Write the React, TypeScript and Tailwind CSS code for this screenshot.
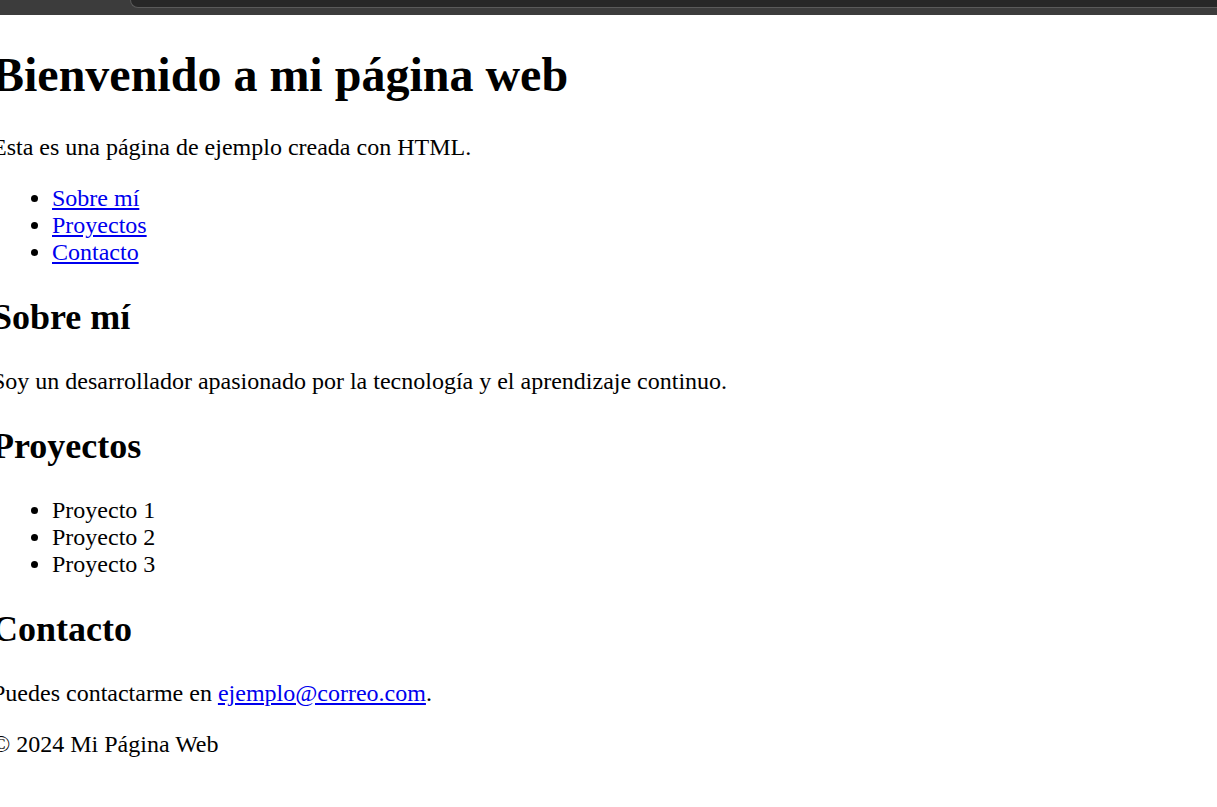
export default function App() {
  return (
    <div className="min-h-screen bg-white">
      {/* browser chrome strip at the top */}
      <div className="flex h-[15px] bg-[#3c3c3c]">
        <div className="w-[130px]" />
        <div className="h-[8px] flex-1 rounded-bl-[12px] border-b border-l border-[#5a5a5a] bg-[#272727]" />
      </div>

      <div className="ml-[-8px] font-['Liberation_Serif','Times_New_Roman',serif] text-[24px] leading-[normal] text-black">
        <h1 className="my-[32.16px] text-[48px] font-bold">Bienvenido a mi página web</h1>
        <p className="my-[24px]">Esta es una página de ejemplo creada con HTML.</p>
        <ul className="my-[24px] list-disc pl-[60px]">
          <li>
            <a href="#sobre" className="text-[#0000ee] underline">Sobre mí</a>
          </li>
          <li>
            <a href="#proyectos" className="text-[#0000ee] underline">Proyectos</a>
          </li>
          <li>
            <a href="#contacto" className="text-[#0000ee] underline">Contacto</a>
          </li>
        </ul>

        <section id="sobre">
          <h2 className="my-[29.88px] text-[36px] font-bold">Sobre mí</h2>
          <p className="my-[24px]">Soy un desarrollador apasionado por la tecnología y el aprendizaje continuo.</p>
        </section>

        <section id="proyectos">
          <h2 className="my-[29.88px] text-[36px] font-bold">Proyectos</h2>
          <ul className="my-[24px] list-disc pl-[60px]">
            <li>Proyecto 1</li>
            <li>Proyecto 2</li>
            <li>Proyecto 3</li>
          </ul>
        </section>

        <section id="contacto">
          <h2 className="my-[29.88px] text-[36px] font-bold">Contacto</h2>
          <p className="my-[24px]">
            Puedes contactarme en{" "}
            <a href="#" className="text-[#0000ee] underline">ejemplo@correo.com</a>.
          </p>
        </section>

        <footer>
          <p className="my-[24px]">© 2024 Mi Página Web</p>
        </footer>
      </div>
    </div>
  );
}
